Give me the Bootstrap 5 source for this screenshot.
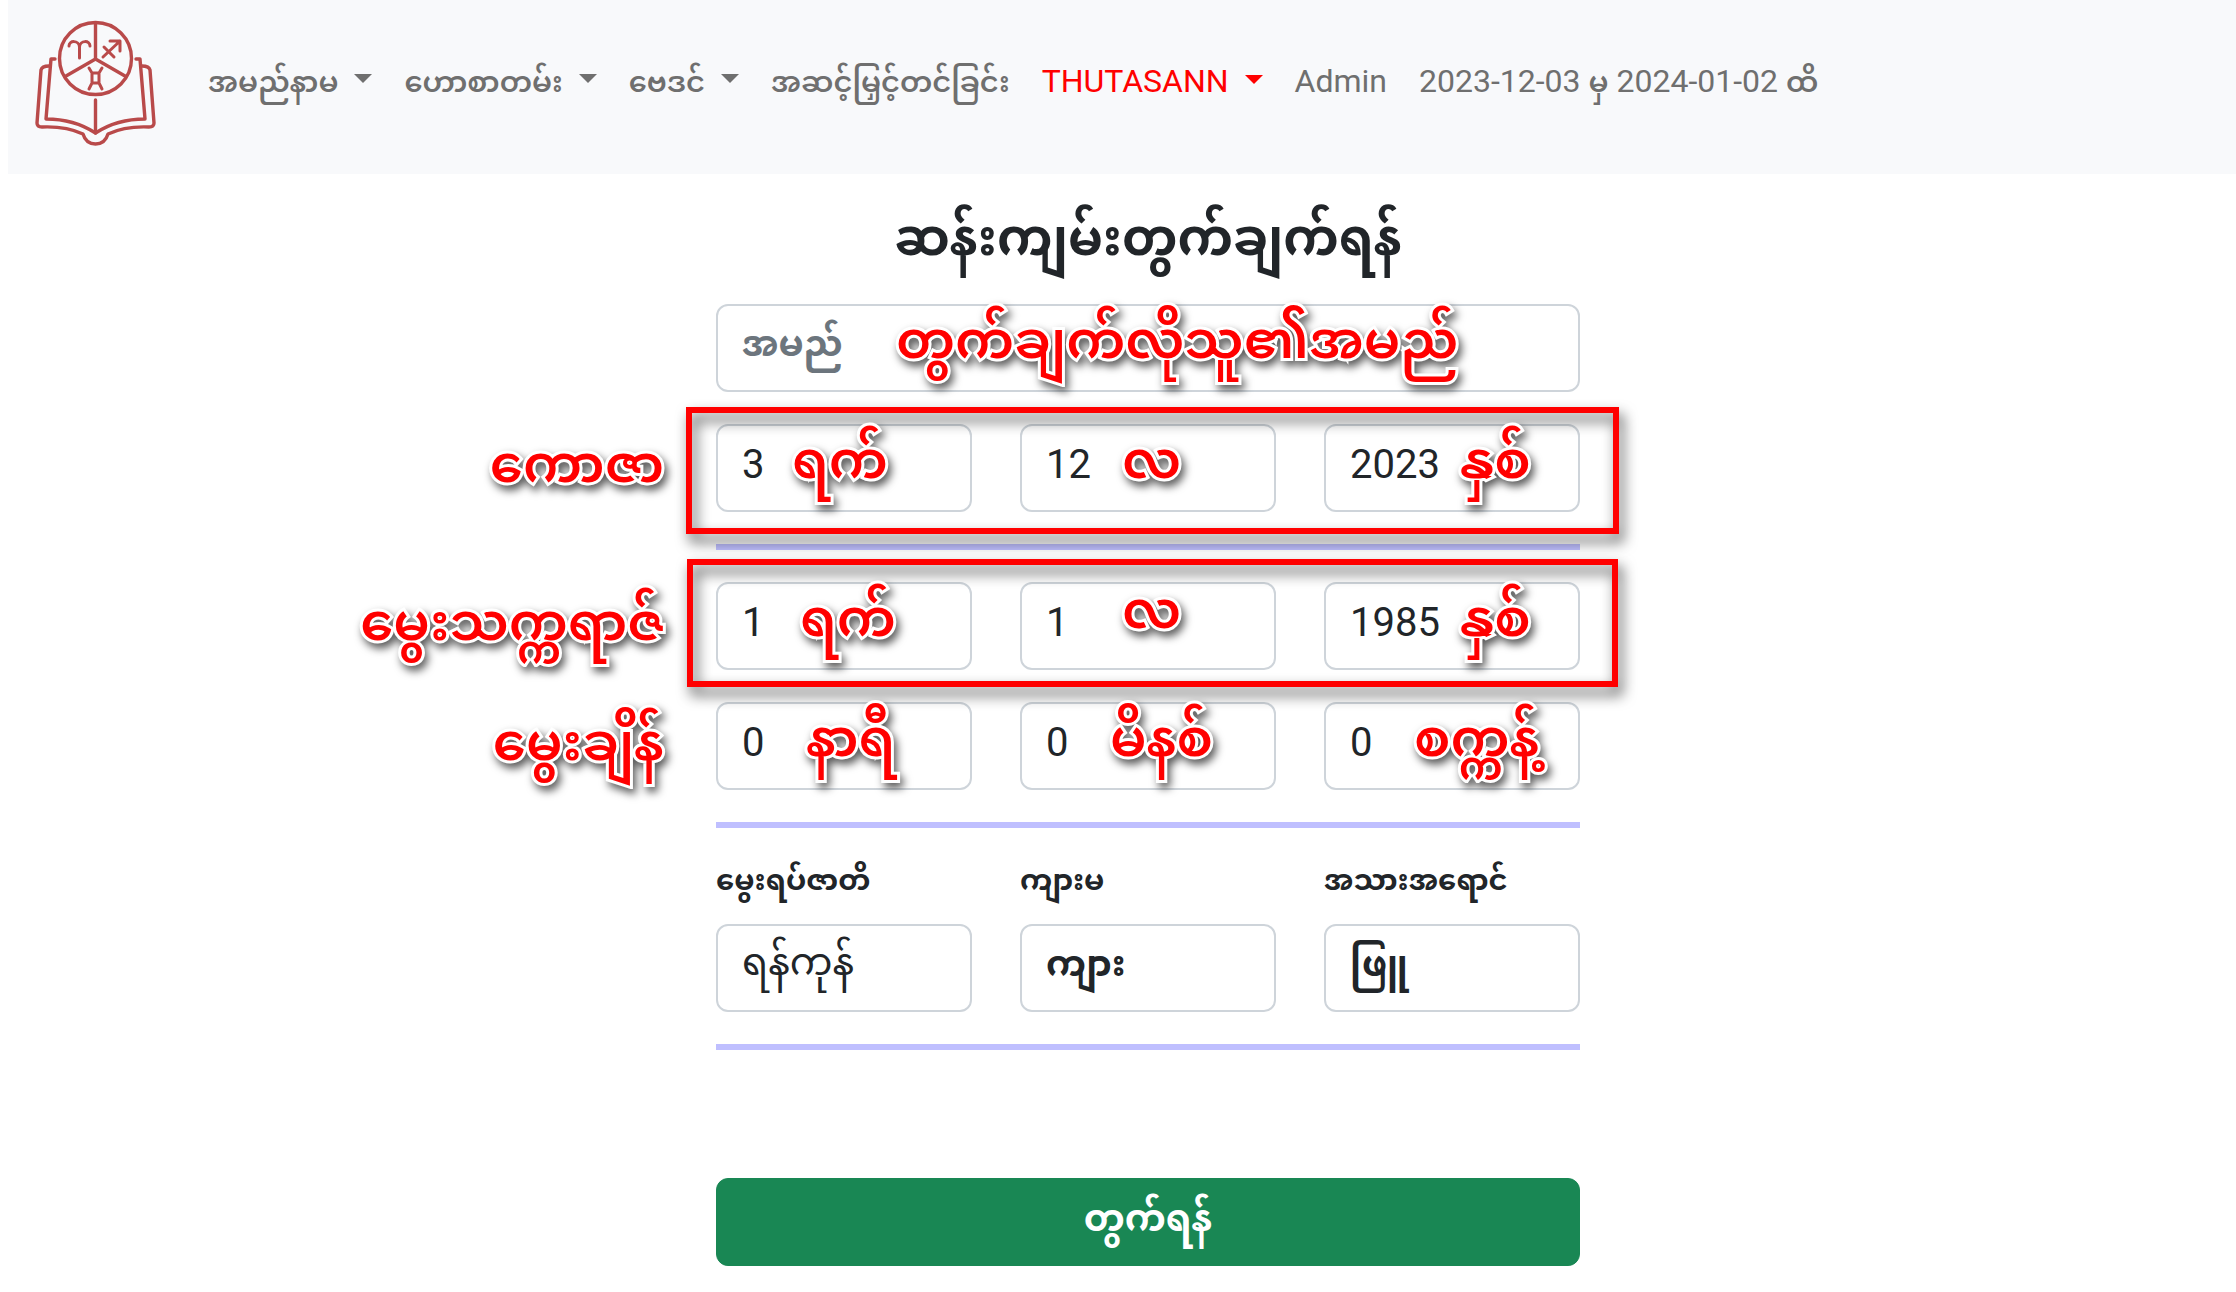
<!DOCTYPE html>
<html lang="my">
<head>
<meta charset="utf-8">
<meta name="viewport" content="width=device-width, initial-scale=1">
<title>ဆန်းကျမ်းတွက်ချက်ရန်</title>
<link href="https://cdn.jsdelivr.net/npm/bootstrap@5.3.0/dist/css/bootstrap.min.css" rel="stylesheet">
<style>
  body { font-family: Roboto, "Noto Sans Myanmar", "Noto Sans", sans-serif; padding-left: 8px; background: #fff; }
  .site-bar { --bs-navbar-nav-link-padding-x: 16px; background: #f8f9fb; min-height: 174px; padding: 0 16px; font-size: 32px; }
  .site-bar .navbar-brand { padding: 0; margin: 0 28px 24px 0; }
  .site-bar .navbar-brand svg { display: block; }
  .site-bar .nav-link { --bs-nav-link-padding-x: 16px; color: #6f6f6f; line-height: 48px; white-space: nowrap; }
  .site-bar .nav-link.hot { color: #f00; }
  .site-bar .dropdown-toggle::after { margin-left: 16px; }
  .site-bar .navbar-nav { padding-bottom: 12px; }
  .mm { font-size: 29px; font-weight: 600; }
  .calc-page { padding-left: 52px; }
  .calc { max-width: 864px; margin: 0 auto; }
  .calc h1 { font-size: 50px; line-height: 64px; font-weight: 700; margin: 32px 0 34px; text-align: center; }
  .calc .form-control { height: 88px; border: 2px solid #ced4da; border-radius: 12px; padding: 0 24px 8px; font-size: 40px; line-height: 60px; color: #212529; appearance: none; }
  .calc .form-control.mm-field { font-size: 36px; font-weight: 700; }
  .calc .form-control.thin { font-size: 38px; font-weight: 400; padding-bottom: 4px; }
  .calc .form-control::placeholder { color: #6c757d; opacity: 1; }
  .trio { display: grid; grid-template-columns: repeat(3, 1fr); column-gap: 48px; position: relative; }
  .trio-gap { margin-top: 32px; }
  .cap-label { font-size: 29px; line-height: 40px; font-weight: 700; margin-bottom: 24px; display: block; white-space: nowrap; }
  .rule { height: 6px; border: 0; background: #bfbfff; opacity: 1; margin: 32px 0; }
  .note { position: absolute; z-index: 3; top: -4px; left: 84px; font-size: 53px; line-height: 80px; font-weight: 600; color: #f00; white-space: nowrap; pointer-events: none;
    -webkit-text-stroke: 6px #fff; paint-order: stroke fill; filter: drop-shadow(3px 5px 4px rgba(0,0,0,.65)); }
  .note-name { left: 180px; }
  .note-day { left: 76px; }
  .note-month { left: 102px; }
  .note-high { top: -12px; }
  .note-year { left: 136px; }
  .note-time { left: 90px; }
  .note-side { left: auto; right: calc(100% + 52px); top: 0; }
  .frame { position: absolute; z-index: 2; inset: -17px -39px -22px -30px; border: 6px solid #f00; pointer-events: none; filter: drop-shadow(4px 8px 7px rgba(0,0,0,.7)); }
  .frame-birth { inset: -23px -38px -17px -29px; }
  .calc .btn { height: 88px; border-radius: 12px; padding-bottom: 12px; font-size: 37px; font-weight: 700; background: #198754; margin-top: 96px; }
</style>
</head>
<body>
<nav class="navbar navbar-expand site-bar">
  <a class="navbar-brand" href="#" aria-label="Home">
    <svg width="140" height="150" viewBox="0 0 140 150" fill="none" stroke="#b94a4a" stroke-width="3.4" stroke-linejoin="round" stroke-linecap="round">
      <circle cx="71.500" cy="58.500" r="36"/>
      <path d="M71.500 23V59L42 76M71.500 59L101 76M71.500 100V133"/>
      <path d="M45 46C45 40 55 40 55.500 47V58M55.500 47C56 40 66 40 66 46" stroke-width="3"/>
      <path d="M79 57L96 41M86 41H96V51M80 47L90 57" stroke-width="3"/>
      <path d="M65 68L68 73H75L78 68M65 89L68 83H75L78 89M68 73V83M75 73V83" stroke-width="3"/>
      <path d="M31 59H27L22 119Q50 119 71.500 133Q93 119 121 119L116 59H112"/>
      <path d="M25 66Q18 66 17 70L13 123Q13 127 18 127Q42 126 59 134Q62 144 71.500 144Q81 144 84 134Q101 126 125 127Q130 127 130 123L126 70Q125 66 118 66"/>
    </svg>
  </a>
  <ul class="navbar-nav align-items-center">
    <li class="nav-item"><a class="nav-link dropdown-toggle" href="#"><span class="mm">အမည်နာမ</span></a></li>
    <li class="nav-item"><a class="nav-link dropdown-toggle" href="#"><span class="mm">ဟောစာတမ်း</span></a></li>
    <li class="nav-item"><a class="nav-link dropdown-toggle" href="#"><span class="mm">ဗေဒင်</span></a></li>
    <li class="nav-item"><a class="nav-link" href="#"><span class="mm">အဆင့်မြှင့်တင်ခြင်း</span></a></li>
    <li class="nav-item"><a class="nav-link dropdown-toggle hot" href="#">THUTASANN</a></li>
    <li class="nav-item"><a class="nav-link" href="#">Admin</a></li>
    <li class="nav-item"><a class="nav-link" href="#">2023-12-03 <span class="mm">မှ</span> 2024-01-02 <span class="mm">ထိ</span></a></li>
  </ul>
</nav>
<main class="calc-page">
  <div class="calc">
  <h1>ဆန်းကျမ်းတွက်ချက်ရန်</h1>
  <form>
    <div class="position-relative">
      <input class="form-control mm-field" type="text" placeholder="အမည်" aria-label="အမည်">
      <span class="note note-name">တွက်ချက်လိုသူ၏အမည်</span>
    </div>
    <div class="trio trio-gap">
      <span class="note note-side">ကောဇာ</span>
      <div class="position-relative"><input class="form-control" type="text" value="3" aria-label="ရက်"><span class="note note-day">ရက်</span></div>
      <div class="position-relative"><input class="form-control" type="text" value="12" aria-label="လ"><span class="note note-month">လ</span></div>
      <div class="position-relative"><input class="form-control" type="text" value="2023" aria-label="နှစ်"><span class="note note-year">နှစ်</span></div>
      <div class="frame"></div>
    </div>
    <hr class="rule">
    <div class="trio">
      <span class="note note-side">မွေးသက္ကရာဇ်</span>
      <div class="position-relative"><input class="form-control" type="text" value="1" aria-label="ရက်"><span class="note">ရက်</span></div>
      <div class="position-relative"><input class="form-control" type="text" value="1" aria-label="လ"><span class="note note-month note-high">လ</span></div>
      <div class="position-relative"><input class="form-control" type="text" value="1985" aria-label="နှစ်"><span class="note note-year">နှစ်</span></div>
      <div class="frame frame-birth"></div>
    </div>
    <div class="trio trio-gap">
      <span class="note note-side">မွေးချိန်</span>
      <div class="position-relative"><input class="form-control" type="text" value="0" aria-label="နာရီ"><span class="note note-time">နာရီ</span></div>
      <div class="position-relative"><input class="form-control" type="text" value="0" aria-label="မိနစ်"><span class="note note-time">မိနစ်</span></div>
      <div class="position-relative"><input class="form-control" type="text" value="0" aria-label="စက္ကန့်"><span class="note note-time">စက္ကန့်</span></div>
    </div>
    <hr class="rule">
    <div class="trio">
      <div><label class="cap-label" for="town">မွေးရပ်ဇာတိ</label><input id="town" class="form-control mm-field thin" type="text" value="ရန်ကုန်"></div>
      <div><label class="cap-label" for="sex">ကျားမ</label><select id="sex" class="form-control mm-field"><option>ကျား</option></select></div>
      <div><label class="cap-label" for="skin">အသားအရောင်</label><select id="skin" class="form-control mm-field"><option>ဖြူ</option></select></div>
    </div>
    <hr class="rule">
    <button class="btn btn-success w-100" type="button">တွက်ရန်</button>
  </form>
  </div>
</main>
<script src="https://cdn.jsdelivr.net/npm/bootstrap@5.3.0/dist/js/bootstrap.bundle.min.js"></script>
</body>
</html>
